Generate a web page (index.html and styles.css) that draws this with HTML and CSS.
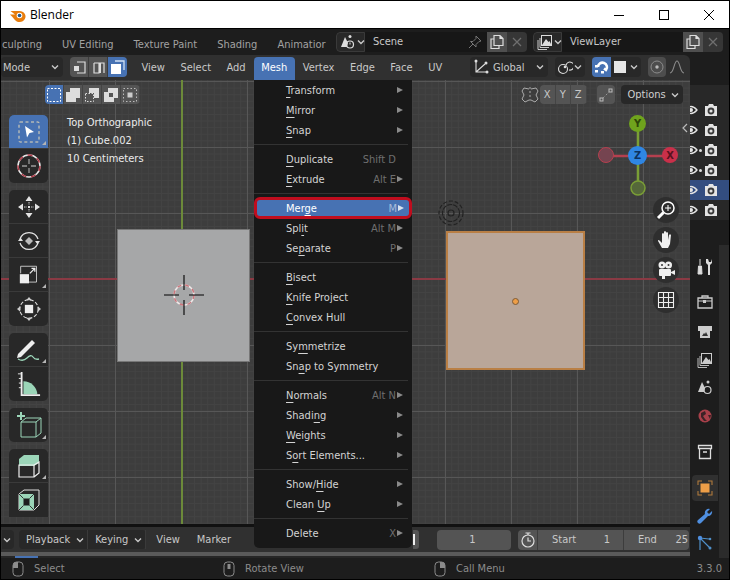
FILE: index.html
```html
<!DOCTYPE html>
<html lang="en">
<head>
    <meta charset="UTF-8">
    <meta name="viewport" content="width=device-width, initial-scale=1.0">
    <title>Blender</title>
    <link rel="stylesheet" href="styles.css">
</head>
<body>
    <!-- shared icons -->
    <svg class="defs" width="0" height="0">
        <symbol id="chev" viewBox="0 0 10 10"><path d="M2 3.5 L5 6.5 L8 3.5" fill="none" stroke="currentColor" stroke-width="1.4"/></symbol>
        <symbol id="copy" viewBox="0 0 16 16"><path d="M5 1.5h6l3 3v7H5zM11 1.5v3h3M5 5H2v9.5h8v-3" fill="none" stroke="currentColor" stroke-width="1.2"/></symbol>
        <symbol id="cross" viewBox="0 0 12 12"><path d="M2 2l8 8M10 2l-8 8" stroke="currentColor" stroke-width="1.3"/></symbol>
        <symbol id="mouse-l" viewBox="0 0 12 16"><rect x="1" y="1" width="10" height="14" rx="3.5" fill="none" stroke="currentColor"/><path d="M1 7V4.500Q1 1 4.500 1H6v6z" fill="currentColor"/></symbol>
        <symbol id="mouse-m" viewBox="0 0 12 16"><rect x="1" y="1" width="10" height="14" rx="3.5" fill="none" stroke="currentColor"/><rect x="4.500" y="3" width="3" height="5" fill="currentColor"/></symbol>
        <symbol id="mouse-r" viewBox="0 0 12 16"><rect x="1" y="1" width="10" height="14" rx="3.5" fill="none" stroke="currentColor"/><path d="M11 7V4.500Q11 1 7.500 1H6v6z" fill="currentColor"/></symbol>
        <symbol id="camera" viewBox="0 0 14 14"><path d="M1 3h3l1-2h4l1 2h3v10H1z" fill="#e4e4e4"/><circle cx="7" cy="8" r="3.4" fill="#3a3a3a"/><circle cx="7" cy="8" r="1.6" fill="#e4e4e4"/></symbol>
        <symbol id="eye" viewBox="0 0 14 14"><path d="M1 7q6-7 12 0q-6 7-12 0z" fill="none" stroke="#e4e4e4" stroke-width="1.3"/><circle cx="7" cy="7" r="2" fill="#e4e4e4"/></symbol>
    </svg>

    <div class="window">
        <div class="titlebar">
            <svg class="logo" width="17" height="14" viewBox="0 0 17 14">
                <path d="M1 6.5h5L1.500 3h6l3 0a6 5.500 0 1 1-5 8.500L3 8.500z" fill="#e87d0d"/>
                <circle cx="10.500" cy="7.500" r="2.800" fill="#fff"/>
                <circle cx="10.500" cy="7.500" r="1.800" fill="#25588d"/>
            </svg>
            <span class="app-name">Blender</span>
            <div class="win-btns">
                <svg width="12" height="12" viewBox="0 0 12 12"><path d="M1 6.500h10" stroke="#000"/></svg>
                <svg width="12" height="12" viewBox="0 0 12 12"><rect x="1.500" y="1.500" width="9" height="9" fill="none" stroke="#000"/></svg>
                <svg width="12" height="12" viewBox="0 0 12 12"><path d="M1 1l10 10M11 1L1 11" stroke="#000"/></svg>
            </div>
        </div>

        <div class="topbar">
            <div class="tabs">
                <span class="tab t-sculpt">culpting</span>
                <span class="tab">UV Editing</span>
                <span class="tab">Texture Paint</span>
                <span class="tab">Shading</span>
                <span class="tab t-anim">Animatior</span>
            </div>
            <div class="selector scene-sel">
                <span class="sel-btn">
                    <svg width="16" height="16" viewBox="0 0 16 16"><path d="M1 13L5 3l3 6-1 4z" fill="#ddd"/><circle cx="10" cy="2.500" r="1.500" fill="#ddd"/><circle cx="10" cy="10.500" r="3.500" fill="none" stroke="#ddd" stroke-width="1.200"/><path d="M10 10.500v-2" stroke="#ddd"/></svg>
                    <svg class="chev" width="10" height="10"><use href="#chev"/></svg>
                </span>
                <span class="sel-input">Scene
                    <svg class="pin" width="14" height="14" viewBox="0 0 14 14"><path d="M8 1l5 5-2 .5-3 3 0 2.500L2.500 6.500 5 6.500l3-3zM5 9l-4 4" fill="none" stroke="#777"/></svg>
                </span>
                <span class="sel-copy"><svg width="16" height="16"><use href="#copy"/></svg></span>
                <span class="sel-x"><svg width="12" height="12"><use href="#cross"/></svg></span>
            </div>
            <div class="selector layer-sel">
                <span class="sel-btn">
                    <svg width="16" height="16" viewBox="0 0 16 16"><rect x="4.500" y="1.500" width="10" height="10" fill="none" stroke="#ddd"/><path d="M5 11l4-6 2.500 3 1-1 2 4z" fill="#ddd"/><path d="M3 4v9.500h9M1 6v9.500h9" fill="none" stroke="#ddd" stroke-width=".9"/></svg>
                    <svg class="chev" width="10" height="10"><use href="#chev"/></svg>
                </span>
                <span class="sel-input">ViewLayer</span>
                <span class="sel-copy"><svg width="16" height="16"><use href="#copy"/></svg></span>
                <span class="sel-x"><svg width="12" height="12"><use href="#cross"/></svg></span>
            </div>
        </div>

        <div class="main">
            <div class="left">
                <div class="header">
                    <span class="dropdown mode-drop">Mode<svg class="chev" width="10" height="10"><use href="#chev"/></svg></span>
                    <div class="btn-group mode-btns">
                        <span class="g-btn"><svg width="15" height="15" viewBox="0 0 15 15"><path d="M5 2h8v11H5" fill="none" stroke="#ddd" stroke-width="1.200"/><rect x="2" y="6" width="5" height="5" fill="#ddd"/></svg></span>
                        <span class="g-btn"><svg width="15" height="15" viewBox="0 0 15 15"><path d="M3 3h10v10M3 3v10h5V3" fill="none" stroke="#ddd" stroke-width="1.200"/><rect x="8" y="3" width="2" height="10" fill="#ddd"/></svg></span>
                        <span class="g-btn on"><svg width="16" height="16" viewBox="0 0 16 16"><path d="M5 2h9v9" fill="none" stroke="#cfe0f5" stroke-width="1.300"/><rect x="1" y="5" width="10" height="10" fill="#fff"/></svg></span>
                    </div>
                    <nav class="menubar">
                        <span class="mb-item">View</span>
                        <span class="mb-item">Select</span>
                        <span class="mb-item">Add</span>
                        <span class="mb-item mb-open">Mesh</span>
                        <span class="mb-item">Vertex</span>
                        <span class="mb-item">Edge</span>
                        <span class="mb-item">Face</span>
                        <span class="mb-item">UV</span>
                    </nav>
                    <div class="header-right">
                        <span class="dropdown global-drop">
                            <svg width="16" height="16" viewBox="0 0 16 16"><path d="M3 1v12h12M3 13l9-8" fill="none" stroke="#ddd" stroke-width="1.100"/><circle cx="3" cy="2" r="1.500" fill="#ddd"/><circle cx="13" cy="4" r="1.500" fill="#ddd"/><circle cx="14" cy="13" r="1.500" fill="#ddd"/></svg>
                            Global<svg class="chev" width="10" height="10"><use href="#chev"/></svg>
                        </span>
                        <span class="dropdown pivot-drop">
                            <svg width="16" height="16" viewBox="0 0 16 16"><circle cx="6" cy="10" r="4.500" fill="none" stroke="#ddd" stroke-width="1.100"/><path d="M9 6a4 4 0 1 1 3 5" fill="none" stroke="#ddd" stroke-width="1.100"/><circle cx="8" cy="8" r="1.300" fill="#ddd"/></svg>
                            <svg class="chev" width="10" height="10"><use href="#chev"/></svg>
                        </span>
                        <span class="magnet">
                            <svg width="16" height="16" viewBox="0 0 16 16"><path d="M4 8a4.500 4.500 0 1 1 8 3l-2-1.500" fill="none" stroke="#fff" stroke-width="2.600"/><rect x="1" y="6" width="3" height="2.500" fill="#fff"/><rect x="1" y="11" width="3" height="2.500" fill="#fff"/><rect x="7" y="12" width="3" height="2.500" fill="#fff"/></svg>
                        </span>
                        <span class="snap-drop"><i class="snap-square"></i><svg class="chev" width="10" height="10"><use href="#chev"/></svg></span>
                        <span class="prop-btn"><svg width="14" height="14" viewBox="0 0 14 14"><circle cx="7" cy="7" r="6" fill="none" stroke="#8c8c8c"/><circle cx="7" cy="7" r="1.700" fill="#bbb"/></svg></span>
                        <span class="falloff"><svg width="16" height="14" viewBox="0 0 16 14"><path d="M1 13C5 13 5 1 8 1s3 12 7 12" fill="none" stroke="#8c8c8c" stroke-width="1.100"/></svg></span>
                    </div>
                </div>

                <div class="viewport">
                    <div class="axis-x"></div>
                    <div class="axis-y"></div>

                    <div class="cube cube-grey"></div>
                    <svg class="cursor3d" width="44" height="44" viewBox="0 0 44 44">
                        <circle cx="22" cy="22" r="10" fill="none" stroke="#f0e8e8" stroke-width="1.500"/>
                        <circle cx="22" cy="22" r="10" fill="none" stroke="#c9757c" stroke-width="1.500" stroke-dasharray="4 4"/>
                        <path d="M22 2v15M22 27v15M2 22h15M27 22h15" stroke="#000" stroke-width="1.100"/>
                    </svg>
                    <div class="cube cube-sel"><i class="origin"></i></div>

                    <svg class="spinner" width="28" height="28" viewBox="0 0 28 28">
                        <circle cx="14" cy="14" r="12" fill="none" stroke="#222" stroke-width="1.200" stroke-dasharray="4 2"/>
                        <circle cx="14" cy="14" r="8.500" fill="none" stroke="#222" stroke-width="1.200" stroke-dasharray="5 1"/>
                        <circle cx="14" cy="14" r="3" fill="none" stroke="#222" stroke-width="1.200"/>
                    </svg>

                    <div class="tool-row sel-modes">
                        <span class="sm on"><svg width="16" height="16" viewBox="0 0 16 16"><rect x="1.500" y="1.500" width="13" height="13" fill="none" stroke="#fff" stroke-dasharray="2 1.500"/></svg></span>
                        <span class="sm"><svg width="16" height="16" viewBox="0 0 16 16"><path d="M5 1h10v10h-4v4H1V5h4z" fill="#ddd"/></svg></span>
                        <span class="sm"><svg width="16" height="16" viewBox="0 0 16 16"><path d="M5 1h10v10h-5V6H5z" fill="#ddd"/><rect x="1.500" y="6.500" width="8" height="8" fill="none" stroke="#ddd" stroke-dasharray="1.500 1.500"/></svg></span>
                        <span class="sm"><svg width="16" height="16" viewBox="0 0 16 16"><path d="M5 1h10v10h-4v4H1V5h4zM6 6v4h4V6z" fill="#ddd" fill-rule="evenodd"/></svg></span>
                        <span class="sm"><svg width="16" height="16" viewBox="0 0 16 16"><rect x="1.500" y="1.500" width="13" height="13" fill="none" stroke="#bbb" stroke-dasharray="1.500 2"/><rect x="5.500" y="5.500" width="5" height="5" fill="#ccc"/></svg></span>
                    </div>

                    <div class="tool-row sym-row">
                        <svg class="sym-icon" width="18" height="16" viewBox="0 0 18 16"><path d="M8 2L3 1 1 4l2 4-2 4 3 3 4-2M10 2l5-1 2 3-2 4 2 4-3 3-4-2" fill="none" stroke="#aaa"/><path d="M9 0v16" stroke="#aaa" stroke-dasharray="2 2"/></svg>
                        <div class="xyz"><span>X</span><span>Y</span><span>Z</span></div>
                        <span class="autolink"><svg width="14" height="14" viewBox="0 0 14 14"><rect x="10" y="1" width="3" height="3" fill="none" stroke="#bbb"/><rect x="1" y="10" width="3" height="3" fill="none" stroke="#bbb"/><path d="M4 10l6-6" stroke="#999" stroke-dasharray="2 2"/></svg></span>
                        <span class="options">Options<svg class="chev" width="10" height="10"><use href="#chev"/></svg></span>
                    </div>

                    <div class="overlay-text">
                        <div>Top Orthographic</div>
                        <div>(1) Cube.002</div>
                        <div>10 Centimeters</div>
                    </div>

                    <div class="toolbar">
                        <div class="tool-group">
                            <div class="tool tool-on tri">
                                <svg width="24" height="24" viewBox="0 0 24 24"><rect x="2" y="2" width="20" height="20" rx="1" fill="none" stroke="#e6d9b8" stroke-dasharray="3 2.500"/><path d="M8 6l9 6-4.500 1-2.500 4.500z" fill="#fff"/></svg>
                            </div>
                            <div class="tool">
                                <svg width="26" height="26" viewBox="0 0 26 26"><circle cx="13" cy="13" r="11" fill="none" stroke="#e8e8e8" stroke-width="1.500"/><circle cx="13" cy="13" r="11" fill="none" stroke="#b03a48" stroke-width="1.500" stroke-dasharray="5 5"/><path d="M13 6v5M13 15v5M6 13h5M15 13h5" stroke="#999" stroke-width="1.300"/></svg>
                            </div>
                        </div>
                        <div class="tool-group">
                            <div class="tool">
                                <svg width="26" height="26" viewBox="0 0 26 26" fill="#e4e4e4"><path d="M13 2l3.500 5h-7zM13 24l-3.500-5h7zM2 13l5-3.500v7zM24 13l-5 3.500v-7z"/><rect x="12" y="12" width="2" height="2"/><path d="M13 8v3M13 15v3M8 13h3M15 13h3" stroke="#e4e4e4" stroke-width=".9" stroke-dasharray="1.500 1"/></svg>
                            </div>
                            <div class="tool">
                                <svg width="26" height="26" viewBox="0 0 26 26"><path d="M4 11a9.500 9.500 0 0 1 18 0M22 15a9.500 9.500 0 0 1-18 0" fill="none" stroke="#e4e4e4" stroke-width="1.200"/><path d="M13 9l4 4-4 4-4-4z" fill="#bbb"/><path d="M2 13l2.500-3.500L7 13zM24 13l-2.500 3.500L19 13z" fill="#e4e4e4"/></svg>
                            </div>
                            <div class="tool tri">
                                <svg width="20" height="20" viewBox="0 0 24 24"><path d="M2 10V1.500h19v19H11" fill="none" stroke="#ddd" stroke-width="1"/><rect x="1" y="11" width="11" height="11" fill="#eee"/><path d="M13 10l6-6M15 4h4v4" fill="none" stroke="#eee" stroke-width="1.500"/></svg>
                            </div>
                            <div class="tool">
                                <svg width="24" height="24" viewBox="0 0 26 26"><circle cx="13" cy="13" r="10" fill="none" stroke="#e0e0e0" stroke-width="1.200" stroke-dasharray="4 2"/><rect x="8.500" y="8.500" width="9" height="9" fill="#eee"/><path d="M13 0l3 3.500h-6zM13 26l-3-3.500h6zM0 13l3.500-3v6zM26 13l-3.500 3v-6z" fill="#ccc"/></svg>
                            </div>
                        </div>
                        <div class="tool-group">
                            <div class="tool tri">
                                <svg width="28" height="26" viewBox="0 0 28 26"><path d="M3 17L17 3l3 3L6 20l-4 1z" fill="#eee"/><path d="M3 22q5 3 9-1t6-1 6 2" fill="none" stroke="#9bd5b8" stroke-width="1.300"/></svg>
                            </div>
                            <div class="tool">
                                <svg width="24" height="26" viewBox="0 0 26 28"><path d="M7 11a15 15 0 0 1 15 14H7z" fill="#9bd5b8"/><path d="M5 1v25h20" fill="none" stroke="#eee" stroke-width="2"/><path d="M1 3h4M2 8h3M2 13h3M2 18h3" stroke="#eee"/></svg>
                            </div>
                        </div>
                        <div class="tool-group">
                            <div class="tool tri">
                                <svg width="28" height="26" viewBox="0 0 28 26"><path d="M2 4h8M6 0v8" stroke="#9bd5b8" stroke-width="2"/><path d="M8 10h15v15H8zM8 10l5-4h15v15l-5 4M23 10l5-4" fill="none" stroke="#9bd5b8" stroke-width="1" transform="translate(-2 0)"/></svg>
                            </div>
                        </div>
                        <div class="tool-group tool-group-last">
                            <div class="tool tri">
                                <svg width="22" height="24" viewBox="0 0 22 24"><path d="M1 5l5-4h15v8l-5 3H1z" fill="#9bd5b8"/><path d="M1 11h15v12H1zM16 11l5-3v11l-5 4" fill="none" stroke="#eee" stroke-width="1.200"/></svg>
                            </div>
                            <div class="tool">
                                <svg width="22" height="22" viewBox="0 0 22 22"><path d="M1 5l5-4h15v15l-5 5H1z" fill="none" stroke="#ddd"/><path d="M1 5h15v16H1z" fill="#9bd5b8"/><rect x="5.500" y="9.500" width="6" height="7" fill="#1e1e1e"/><path d="M1 5l4.500 4.500M16 5l-4.500 4.500M1 21l4.500-4.500M16 21l-4.500-4.500" stroke="#333"/></svg>
                            </div>
                        </div>
                    </div>

                    <svg class="gizmo" width="72" height="96" viewBox="0 0 72 96">
                        <path d="M36 14v64" stroke="#7a9e36" stroke-width="2.500"/>
                        <path d="M8 46h56" stroke="#b5404f" stroke-width="2.500"/>
                        <circle cx="36" cy="78" r="7" fill="#55683a" stroke="#7a9e36" stroke-width="1.500"/>
                    </svg>
                    <div class="gz gz-y">Y</div>
                    <div class="gz gz-z">Z</div>
                    <div class="gz gz-x">X</div>
                    <div class="gz gz-nx"></div>

                    <svg class="collapse" width="10" height="12" viewBox="0 0 10 12"><path d="M7 2L3 6l4 4" fill="none" stroke="#bbb" stroke-width="1.200"/></svg>

                    <div class="nav-btn nb-zoom">
                        <svg width="20" height="20" viewBox="0 0 20 20"><circle cx="12" cy="8" r="6" fill="none" stroke="#fff" stroke-width="1.500"/><path d="M12 5v6M9 8h6" stroke="#fff"/><path d="M7.500 12.500L2 18" stroke="#fff" stroke-width="3"/></svg>
                    </div>
                    <div class="nav-btn nb-hand">
                        <svg width="20" height="20" viewBox="0 0 20 20"><path d="M6 18L2 11q0-2 2 0l2 2V4q1-2 2 0v5V2q1-2 2 0v7V3q1-2 2 0v7l1-5q1-1.500 2 0l-1 9-2 4z" fill="#eee"/></svg>
                    </div>
                    <div class="nav-btn nb-cam">
                        <svg width="20" height="20" viewBox="0 0 20 20" fill="#eee"><circle cx="6" cy="5" r="3.500"/><circle cx="12.500" cy="5" r="3.500"/><rect x="3" y="9" width="12" height="7" rx="1"/><path d="M15 12l4-2v5l-4-2zM6 16h3v3H6z"/><circle cx="6" cy="5" r="1" fill="#333"/><circle cx="12.500" cy="5" r="1" fill="#333"/></svg>
                    </div>
                    <div class="nav-btn nb-grid">
                        <svg width="18" height="18" viewBox="0 0 18 18"><path d="M1.500 1.500h15v15h-15zM6.500 1.500v15M11.500 1.500v15M1.500 6.500h15M1.500 11.500h15" fill="none" stroke="#eee" stroke-width="1.100"/></svg>
                    </div>

                    <!-- open Mesh menu -->
                    <div class="menu">
                        <div class="item"><span class="lbl"><u>T</u>ransform</span><i class="arrow"></i></div>
                        <div class="item"><span class="lbl"><u>M</u>irror</span><i class="arrow"></i></div>
                        <div class="item"><span class="lbl"><u>S</u>nap</span><i class="arrow"></i></div>
                        <hr>
                        <div class="item"><span class="lbl"><u>D</u>uplicate</span><span class="key">Shift D</span><i class="arrow none"></i></div>
                        <div class="item"><span class="lbl"><u>E</u>xtrude</span><span class="key">Alt E</span><i class="arrow"></i></div>
                        <hr>
                        <div class="item item-active"><span class="lbl">Mer<u>g</u>e</span><span class="key">M</span><i class="arrow"></i></div>
                        <div class="item"><span class="lbl">Spl<u>i</u>t</span><span class="key">Alt M</span><i class="arrow"></i></div>
                        <div class="item"><span class="lbl">Se<u>p</u>arate</span><span class="key">P</span><i class="arrow"></i></div>
                        <hr>
                        <div class="item"><span class="lbl"><u>B</u>isect</span></div>
                        <div class="item"><span class="lbl"><u>K</u>nife Project</span></div>
                        <div class="item"><span class="lbl"><u>C</u>onvex Hull</span></div>
                        <hr>
                        <div class="item"><span class="lbl">Sy<u>m</u>metrize</span></div>
                        <div class="item"><span class="lbl">Sn<u>a</u>p to Symmetry</span></div>
                        <hr>
                        <div class="item"><span class="lbl"><u>N</u>ormals</span><span class="key">Alt N</span><i class="arrow"></i></div>
                        <div class="item"><span class="lbl">Shadi<u>n</u>g</span><i class="arrow"></i></div>
                        <div class="item"><span class="lbl"><u>W</u>eights</span><i class="arrow"></i></div>
                        <div class="item"><span class="lbl">S<u>o</u>rt Elements...</span><i class="arrow"></i></div>
                        <hr>
                        <div class="item"><span class="lbl">Show/<u>H</u>ide</span><i class="arrow"></i></div>
                        <div class="item"><span class="lbl">Clean <u>U</u>p</span><i class="arrow"></i></div>
                        <hr>
                        <div class="item"><span class="lbl">Delete</span><span class="key">X</span><i class="arrow"></i></div>
                    </div>
                </div>

                <div class="timeline">
                    <div class="tl-head">
                        <span class="tl-stub"><svg class="chev" width="10" height="10"><use href="#chev"/></svg></span>
                        <div class="tl-drops">
                            <span class="tl-drop">Playback<svg class="chev" width="10" height="10"><use href="#chev"/></svg></span>
                            <span class="tl-drop">Keying<svg class="chev" width="10" height="10"><use href="#chev"/></svg></span>
                        </div>
                        <span class="tl-link">View</span>
                        <span class="tl-link">Marker</span>
                        <span class="tl-play"><i></i></span>
                        <span class="frame">1</span>
                        <span class="timer">
                            <svg width="16" height="16" viewBox="0 0 16 16"><circle cx="8" cy="9" r="6" fill="none" stroke="#ddd" stroke-width="1.200"/><path d="M8 5.500V9h3M5.500 1h5M8 1v2" fill="none" stroke="#ddd" stroke-width="1.200"/></svg>
                        </span>
                        <span class="range r-start"><span>Start</span><span>1</span></span>
                        <span class="range r-end"><span>End</span><span>25</span></span>
                    </div>
                    <div class="tl-scroll"><i class="tl-thumb"></i></div>
                </div>
            </div>

            <div class="right">
                <div class="outliner">
                    <div class="ol-head"></div>
                    <div class="ol-row"><svg class="eye" width="14" height="14"><use href="#eye"/></svg><svg class="cam" width="14" height="14"><use href="#camera"/></svg></div>
                    <div class="ol-row"><svg class="eye" width="14" height="14"><use href="#eye"/></svg><svg class="cam" width="14" height="14"><use href="#camera"/></svg></div>
                    <div class="ol-row"><svg class="eye" width="14" height="14"><use href="#eye"/></svg><i class="dot"></i><svg class="cam" width="14" height="14"><use href="#camera"/></svg></div>
                    <div class="ol-row"><svg class="eye" width="14" height="14"><use href="#eye"/></svg><i class="dot"></i><svg class="cam" width="14" height="14"><use href="#camera"/></svg></div>
                    <div class="ol-row ol-sel"><svg class="eye" width="14" height="14"><use href="#eye"/></svg><svg class="cam" width="14" height="14"><use href="#camera"/></svg></div>
                    <div class="ol-row"><svg class="eye" width="14" height="14"><use href="#eye"/></svg><svg class="cam" width="14" height="14"><use href="#camera"/></svg></div>
                </div>
                <div class="props">
                    <div class="prop-tabs">
                        <span class="ptab p-tool"><svg width="18" height="18" viewBox="0 0 18 18"><path d="M4 1v6M2.500 8h3l.5 8H2z" stroke="#ddd" fill="#ddd"/><path d="M10 1v4l2 2v10h2V7l2-2V1l-1 3h-2l-1-3z" fill="#ddd"/></svg></span>
                        <span class="ptab p-render"><svg width="16" height="14" viewBox="0 0 16 14"><path d="M1 3h14v10H1zM5 3V1h6v2" fill="none" stroke="#ccc" stroke-width="1.300"/><path d="M1 6h14" stroke="#ccc"/><rect x="6" y="5" width="3" height="3" fill="#ccc"/></svg></span>
                        <span class="ptab p-output"><svg width="16" height="14" viewBox="0 0 16 14"><path d="M1 1h14v5h-2v7H3V6H1z" fill="#ccc"/><path d="M5 11l2-3 1 1 1-2 2 4z" fill="#333"/></svg></span>
                        <span class="ptab p-layer"><svg width="16" height="16" viewBox="0 0 16 16"><rect x="4.500" y="1.500" width="10" height="10" fill="none" stroke="#ccc"/><path d="M5 11l4-6 2.500 3 1-1 2 4z" fill="#ccc"/><path d="M3 4v9.500h9M1 6v9.500h9" fill="none" stroke="#ccc" stroke-width=".9"/></svg></span>
                        <span class="ptab p-scene"><svg width="16" height="16" viewBox="0 0 16 16"><path d="M1 13L5 3l3 6-1 4z" fill="#ccc"/><circle cx="11" cy="3" r="1.500" fill="#ccc"/><circle cx="10.500" cy="11" r="3.500" fill="none" stroke="#ccc" stroke-width="1.200"/></svg></span>
                        <span class="ptab p-world"><svg width="16" height="16" viewBox="0 0 16 16"><circle cx="8" cy="8" r="6.500" fill="#a8404a"/><path d="M4 5l4-2 1 3-3 2 2 3 2 2-3 0-3-4zM11 7l3 0-1 4z" fill="#3a2226"/></svg></span>
                        <span class="ptab p-coll"><svg width="16" height="16" viewBox="0 0 16 16"><path d="M1.500 1.500h13v3h-13zM2.500 4.500v10h11v-10M6 8h4" fill="none" stroke="#ddd" stroke-width="1.300"/></svg></span>
                        <span class="ptab p-object"><svg width="16" height="16" viewBox="0 0 16 16"><rect x="3.500" y="3.500" width="9" height="9" fill="#ee9e47"/><path d="M1 5V1h4M11 1h4v4M15 11v4h-4M5 15H1v-4" fill="none" stroke="#b07a3c" stroke-width="1.100"/></svg></span>
                        <span class="ptab p-mod"><svg width="16" height="16" viewBox="0 0 16 16"><path d="M15 3l-3 3-2-2 3-3a4 4 0 0 0-5 5L1 12a2 2 0 0 0 3 3l7-7a4 4 0 0 0 4-5z" fill="#4f8fe0"/></svg></span>
                        <span class="ptab p-part"><svg width="16" height="16" viewBox="0 0 16 16"><path d="M3 3l10 10M3 3l9 1M3 3v12" stroke="#4f8fc8" stroke-width="1.200" fill="none"/><circle cx="3" cy="3" r="2.200" fill="#4f8fe0"/><circle cx="13" cy="4" r="1.300" fill="#4f8fc8"/><circle cx="13" cy="13" r="1.500" fill="#4f8fc8"/></svg></span>
                    </div>
                    <div class="prop-body"></div>
                </div>
            </div>
        </div>

        <div class="statusbar">
            <span class="st st-1"><svg width="12" height="16"><use href="#mouse-l"/></svg>Select</span>
            <span class="st st-2"><svg width="12" height="16"><use href="#mouse-m"/></svg>Rotate View</span>
            <span class="st st-3"><svg width="12" height="16"><use href="#mouse-r"/></svg>Call Menu</span>
            <span class="version">3.3.0</span>
        </div>
    </div>
</body>
</html>
```

FILE: styles.css
```css
* {
    box-sizing: border-box;
}
body {
    margin: 0;
    font-family: "DejaVu Sans", sans-serif;
    font-stretch: condensed;
    font-size: 11px;
    color: #d0d0d0;
    background-color: #000;
}
.defs {
    position: absolute;
}
svg {
    flex: none;
    display: block;
}
.chev {
    color: #c8c8c8;
}
.window {
    width: 730px;
    height: 580px;
    border: 1px solid #000;
    display: flex;
    flex-direction: column;
    overflow: hidden;
    background-color: #1d1d1d;
}

/* window title */
.titlebar {
    height: 27px;
    background-color: #fff;
    color: #000;
    display: flex;
    align-items: center;
    padding-left: 8px;
    flex: none;
}
.app-name {
    font-family: "Open Sans", sans-serif;
    font-stretch: normal;
    font-size: 12px;
    margin-left: 4px;
}
.win-btns {
    margin-left: auto;
    display: flex;
    gap: 33px;
    padding-right: 14px;
}

/* workspace bar */
.topbar {
    height: 27px;
    flex: none;
    display: flex;
    align-items: center;
    padding-bottom: 1px;
    background-color: #1d1d1d;
    border-top: 1px solid #000;
}
.tabs {
    width: 335px;
    margin-top: 5px;
    display: flex;
    gap: 20px;
    color: #a2a2a2;
    white-space: nowrap;
}
.t-sculpt {
    margin-left: 1px;
}
.selector {
    display: flex;
    height: 20px;
    border-radius: 4px;
    overflow: hidden;
}
.scene-sel {
    width: 191px;
}
.layer-sel {
    width: 190px;
    margin-left: 6px;
}
.sel-btn {
    width: 29px;
    background-color: #282828;
    border: 1px solid #3a3a3a;
    border-radius: 4px 0 0 4px;
    display: flex;
    align-items: center;
    padding-left: 3px;
}
.sel-input {
    flex: 1;
    background-color: #171717;
    padding-left: 8px;
    display: flex;
    align-items: center;
    justify-content: space-between;
    padding-right: 5px;
    color: #c8c8c8;
}
.sel-copy {
    width: 20px;
    background-color: #4f4f4f;
    color: #ddd;
    display: flex;
    align-items: center;
    justify-content: center;
}
.sel-x {
    width: 20px;
    background-color: #363636;
    color: #6f6f6f;
    display: flex;
    align-items: center;
    justify-content: center;
}

/* main area */
.main {
    flex: 1;
    display: flex;
    min-height: 0;
}
.left {
    width: 689px;
    display: flex;
    flex-direction: column;
}
.right {
    flex: 1;
    display: flex;
    flex-direction: column;
    background-color: #1d1d1d;
}

/* 3D view header */
.header {
    height: 25px;
    flex: none;
    display: flex;
    align-items: center;
    padding: 0 5px 1px 0;
    background-color: #303030;
    color: #c8c8c8;
    border-radius: 0 6px 0 0;
}
.dropdown {
    height: 20px;
    background-color: #282828;
    border-radius: 4px;
    display: flex;
    align-items: center;
}
.mode-drop {
    width: 62px;
    flex: none;
    padding: 0 3px 0 2px;
    justify-content: space-between;
}
.mode-btns {
    margin-left: 7px;
}
.btn-group {
    display: flex;
    flex: none;
    height: 20px;
    border-radius: 4px;
    overflow: hidden;
}
.g-btn {
    width: 19px;
    background-color: #545454;
    display: flex;
    align-items: center;
    justify-content: center;
    border-right: 1px solid #3d3d3d;
}
.g-btn.on {
    background-color: #4772b3;
    border-right: 0;
}
.menubar {
    display: flex;
    margin-left: 7px;
    margin-bottom: -1px;
    align-self: flex-end;
}
.mb-item {
    height: 23px;
    padding: 0 8px 2px 7.500px;
    display: flex;
    align-items: center;
    border-radius: 4px 4px 0 0;
}
.mb-open {
    background-color: #4772b3;
    color: #fff;
}
.header-right {
    margin-left: auto;
    display: flex;
    align-items: center;
}
.global-drop {
    width: 78px;
    padding: 0 3px;
    gap: 4px;
}
.global-drop .chev {
    margin-left: auto;
}
.pivot-drop {
    margin-left: 7px;
    width: 30px;
    padding: 0 2px;
}
.magnet {
    width: 19px;
    height: 20px;
    margin-left: 7px;
    background-color: #4772b3;
    border-radius: 4px 0 0 4px;
    display: flex;
    align-items: center;
    justify-content: center;
}
.snap-drop {
    width: 30px;
    height: 20px;
    background-color: #282828;
    border-radius: 0 4px 4px 0;
    display: flex;
    align-items: center;
    gap: 3px;
    padding-left: 3px;
}
.snap-square {
    width: 12px;
    height: 12px;
    background-color: #e6e6e6;
}
.prop-btn {
    width: 18px;
    height: 20px;
    margin-left: 7px;
    background-color: #4d4d4d;
    border-radius: 4px;
    display: flex;
    align-items: center;
    justify-content: center;
}
.falloff {
    margin-left: 3px;
}

/* 3D viewport, a free canvas */
.viewport {
    flex: 1;
    position: relative;
    z-index: 2;
    background-color: #3d3d3d;
    background-image:
        linear-gradient(to right, #575757 1px, transparent 1px),
        linear-gradient(to bottom, #575757 1px, transparent 1px),
        linear-gradient(to right, #434343 1px, transparent 1px),
        linear-gradient(to bottom, #434343 1px, transparent 1px);
    background-size: 66px 66px, 66px 66px, 6.6px 6.6px, 6.6px 6.6px;
    background-position: 48px 0, 0 1px, 48px 0, 0 1px;
}
.axis-x {
    position: absolute;
    left: 0;
    right: 0;
    top: 198px;
    height: 2px;
    background-color: #8a3a44;
}
.axis-y {
    position: absolute;
    left: 180px;
    top: 0;
    bottom: 0;
    width: 2px;
    background-color: #6c8a3a;
}
.cube {
    position: absolute;
}
.cube-grey {
    left: 116px;
    top: 149px;
    width: 133px;
    height: 133px;
    background-color: #a6a7a8;
    border: 1px solid #777;
}
.cube-sel {
    left: 445px;
    top: 151px;
    width: 139px;
    height: 139px;
    background-color: #b9a699;
    border: 2px solid #b97f45;
}
.origin {
    position: absolute;
    left: 64px;
    top: 65px;
    width: 7px;
    height: 7px;
    background-color: #ee9e47;
    border: 1px solid #7a5a3a;
    border-radius: 50%;
}
.cursor3d {
    position: absolute;
    left: 161px;
    top: 193px;
}
.spinner {
    position: absolute;
    left: 436px;
    top: 119px;
}
.tool-row {
    position: absolute;
    top: 5px;
    display: flex;
    align-items: center;
}
.sel-modes {
    left: 44px;
    height: 19px;
    border-radius: 4px;
    overflow: hidden;
}
.sm {
    width: 19px;
    height: 19px;
    background-color: #545454;
    display: flex;
    align-items: center;
    justify-content: center;
    border-right: 1px solid #444;
}
.sm.on {
    background-color: #4772b3;
}
.sym-row {
    left: 520px;
}
.xyz {
    display: flex;
    margin-left: 1px;
    border-radius: 4px;
    overflow: hidden;
}
.xyz span {
    width: 15.500px;
    height: 19px;
    background-color: #545454;
    color: #c8c8c8;
    display: flex;
    align-items: center;
    justify-content: center;
    border-right: 1px solid #444;
}
.autolink {
    width: 18px;
    height: 19px;
    margin-left: 10px;
    background-color: #545454;
    border-radius: 4px;
    display: flex;
    align-items: center;
    justify-content: center;
}
.options {
    width: 62px;
    height: 19px;
    margin-left: 6px;
    background-color: #282828;
    border-radius: 4px;
    display: flex;
    align-items: center;
    padding: 0 3px 0 7px;
    justify-content: space-between;
}
.overlay-text {
    position: absolute;
    left: 66px;
    top: 34px;
    color: #ececec;
    line-height: 18px;
}

/* tool shelf */
.toolbar {
    position: absolute;
    left: 8px;
    top: 35px;
    width: 39px;
    display: flex;
    flex-direction: column;
    gap: 7px;
}
.tool-group {
    background-color: #282828;
    border-radius: 5px;
    overflow: hidden;
}
.tool-group-last {
    border-radius: 5px 5px 0 0;
}
.tool {
    height: 34px;
    display: flex;
    align-items: center;
    justify-content: center;
    border-bottom: 1px solid #3a3a3a;
    position: relative;
}
.tool:last-child {
    border-bottom: 0;
}
.tool-on {
    background-color: #4772b3;
}
.tri::after {
    content: "";
    position: absolute;
    right: 2px;
    bottom: 3px;
    border-left: 4px solid transparent;
    border-bottom: 4px solid #b5b5b5;
}

/* navigation gizmo */
.gizmo {
    position: absolute;
    left: 601px;
    top: 30px;
}
.gz {
    position: absolute;
    border-radius: 50%;
    display: flex;
    align-items: center;
    justify-content: center;
    font-weight: bold;
    font-size: 11px;
}
.gz-y {
    left: 628px;
    top: 35px;
    width: 17px;
    height: 17px;
    background-color: #6fa31d;
    color: #2d4508;
}
.gz-z {
    left: 627px;
    top: 66px;
    width: 19px;
    height: 19px;
    background-color: #2f86e3;
    color: #0d3360;
}
.gz-x {
    left: 661px;
    top: 67px;
    width: 16px;
    height: 16px;
    background-color: #c9304a;
    color: #5a1220;
}
.gz-nx {
    left: 597px;
    top: 67px;
    width: 16px;
    height: 16px;
    background-color: #754450;
    border: 1.500px solid #b5404f;
}
.collapse {
    position: absolute;
    left: 679px;
    top: 42px;
}
.nav-btn {
    position: absolute;
    left: 652px;
    width: 26px;
    height: 26px;
    border-radius: 50%;
    background-color: #2e2e2e;
    display: flex;
    align-items: center;
    justify-content: center;
}
.nb-zoom { top: 117px; }
.nb-hand { top: 147px; }
.nb-cam { top: 177px; }
.nb-grid { top: 207px; }

/* open menu */
.menu {
    position: absolute;
    left: 253px;
    top: 0;
    width: 158px;
    height: 468px;
    padding-right: 4px;
    background-color: #181818;
    border-radius: 0 0 5px 5px;
    color: #d4d4d4;
    z-index: 5;
}
.menu hr {
    height: 1px;
    border: 0;
    margin: 4px 0 4px;
    background-color: #333;
}
.item {
    height: 20px;
    display: flex;
    align-items: center;
    padding-left: 32px;
}
.item u {
    text-underline-offset: 3px;
}
.key {
    margin-left: auto;
    color: #6f6f6f;
}
.lbl + .arrow {
    margin-left: auto;
}
.arrow {
    width: 0;
    height: 0;
    margin: 0 5px 0 1px;
    border-left: 6px solid #8a8a8a;
    border-top: 3.500px solid transparent;
    border-bottom: 3.500px solid transparent;
}
.arrow.none {
    visibility: hidden;
}
.item-active {
    height: 22px;
    margin: -1px -4px -1px 0;
    padding-right: 4px;
    background-color: #4772b3;
    border: 3px solid #c00d1e;
    border-radius: 6px;
    padding-left: 29px;
    color: #fff;
}
.item-active .key {
    color: #a9bcd9;
}
.item-active .arrow {
    border-left-color: #d8e2f0;
    margin-right: 1px;
}

/* timeline */
.timeline {
    height: 34px;
    flex: none;
    border-top: 3px solid #111;
    background-color: #303030;
    display: flex;
    flex-direction: column;
}
.tl-head {
    height: 25px;
    display: flex;
    align-items: center;
    padding-right: 1px;
    color: #c8c8c8;
}
.tl-stub {
    width: 12px;
    height: 19px;
    background-color: #282828;
    border-radius: 0 4px 4px 0;
    display: flex;
    align-items: center;
    margin-left: 1px;
}
.tl-drops {
    display: flex;
    margin-left: 5px;
    height: 19px;
    background-color: #282828;
    border-radius: 4px;
}
.tl-drop {
    display: flex;
    align-items: center;
    gap: 5px;
    padding: 0 2px 0 7px;
    border-right: 1px solid #3a3a3a;
}
.tl-link {
    margin-left: 10px;
}
.tl-link + .tl-link {
    margin-left: 17px;
}
.tl-play {
    margin-left: auto;
    width: 6px;
    height: 19px;
    background-color: #545454;
    border-radius: 0 3px 3px 0;
    margin-right: 18px;
    display: flex;
    align-items: center;
}
.tl-play i {
    width: 2px;
    height: 11px;
    background-color: #eee;
}
.frame {
    width: 74px;
    height: 20px;
    padding-right: 3px;
    background-color: #545454;
    border-radius: 4px;
    display: flex;
    align-items: center;
    justify-content: center;
}
.timer {
    width: 19px;
    height: 20px;
    margin-left: 7px;
    background-color: #545454;
    border-radius: 4px 0 0 4px;
    display: flex;
    align-items: center;
    justify-content: center;
}
.range {
    height: 20px;
    background-color: #545454;
    display: flex;
    align-items: center;
    justify-content: space-between;
}
.r-start {
    width: 87px;
    padding: 0 13px 0 14px;
    border-left: 1px solid #3d3d3d;
    border-right: 1px solid #3d3d3d;
}
.r-end {
    width: 65px;
    padding: 0 1px 0 14px;
    border-radius: 0 4px 4px 0;
}
.tl-scroll {
    flex: 1;
    background: linear-gradient(to bottom, #5a5a5a 4px, #262626 4px);
    padding: 4px 0 0 14px;
}
.tl-thumb {
    display: block;
    width: 23px;
    height: 2px;
    background-color: #4772b3;
}

/* outliner and properties on the right */
.outliner {
    height: 165px;
    flex: none;
    background-color: #282828;
    display: flex;
    flex-direction: column;
}
.ol-head {
    height: 30px;
    margin-bottom: 15px;
    flex: none;
    background-color: #1d1d1d;
}
.ol-row {
    height: 20px;
    flex: none;
    display: flex;
    align-items: center;
    position: relative;
    overflow: hidden;
}
.ol-sel {
    background-color: #334d80;
}
.eye {
    margin-left: -6px;
}
.dot {
    width: 3px;
    height: 3px;
    margin-left: 1px;
    border-radius: 50%;
    background-color: #ddd;
}
.cam {
    position: absolute;
    left: 14px;
    top: 3px;
}
.props {
    flex: 1;
    display: flex;
    margin-top: 25px;
    min-height: 0;
}
.prop-tabs {
    width: 29px;
    display: flex;
    flex-direction: column;
    position: relative;
    background-color: #1d1d1d;
}
.prop-body {
    flex: 1;
    background-color: #2b2b2b;
}
.ptab {
    position: absolute;
    left: 2px;
    width: 26px;
    height: 26px;
    display: flex;
    align-items: center;
    justify-content: center;
    border-radius: 4px 0 0 4px;
}
.p-tool { top: 9px; }
.p-render { top: 44px; }
.p-output { top: 74px; }
.p-layer { top: 102px; }
.p-scene { top: 129px; }
.p-world { top: 158px; }
.p-coll { top: 194px; }
.p-object { top: 230px; background-color: #303030; }
.p-mod { top: 258px; }
.p-part { top: 285px; }

/* status bar */
.statusbar {
    height: 21px;
    flex: none;
    display: flex;
    align-items: center;
    background-color: #1d1d1d;
    color: #8c8c8c;
}
.st {
    display: flex;
    align-items: center;
    gap: 10px;
    color: #8c8c8c;
}
.st-1 { margin-left: 11px; width: 211px; }
.st-2 { width: 211px; }
.st-3 { gap: 10px; }
.version {
    margin-left: auto;
    padding-right: 7px;
}
```
